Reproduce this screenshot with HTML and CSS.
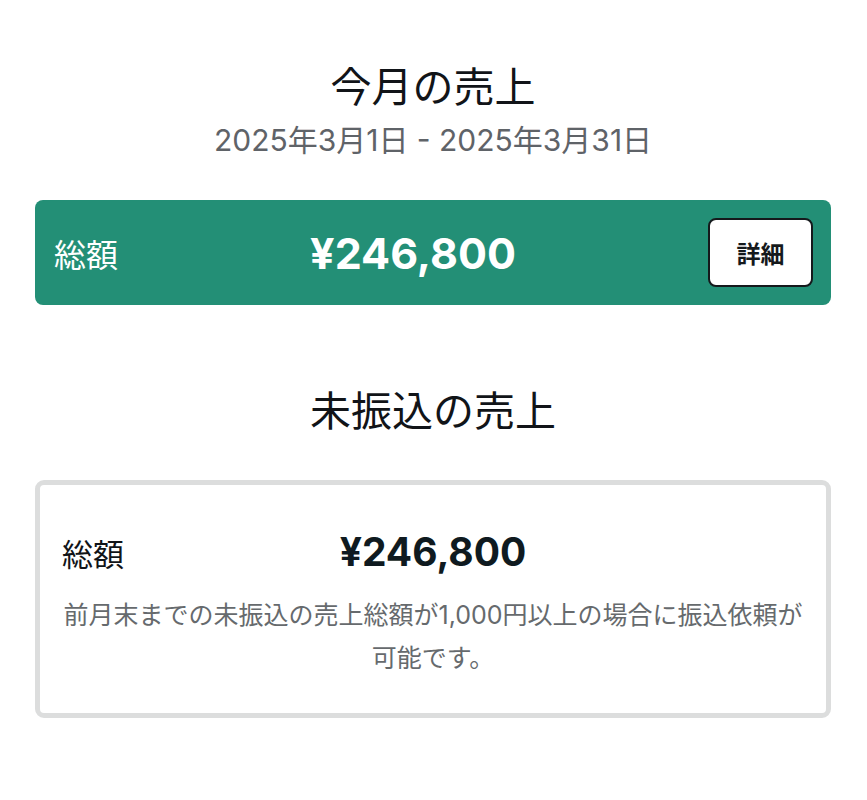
FILE: index.html
```html
<!DOCTYPE html>
<html lang="ja">
<head>
  <meta charset="UTF-8" />
  <meta name="viewport" content="width=device-width, initial-scale=1.0"/>
  <title>売上</title>
  <link rel="stylesheet" href="styles.css">
</head>
<body>
  <div class="container">
    <div class="section-head">
      <h1 class="section-title">今月の売上</h1>
      <p class="period">2025年3月1日 - 2025年3月31日</p>
    </div>

    <div class="total-bar">
      <span class="total-label">総額</span>
      <span class="total-amount">¥246,800</span>
      <button class="detail-btn">詳細</button>
    </div>

    <h2 class="section-title unpaid-title">未振込の売上</h2>

    <div class="unpaid-card">
      <div class="unpaid-row">
        <span class="unpaid-label">総額</span>
        <span class="unpaid-amount">¥246,800</span>
        <span></span>
      </div>
      <p class="unpaid-note">前月末までの未振込の売上総額が1,000円以上の場合に振込依頼が可能です。</p>
    </div>
  </div>
</body>
</html>
```

FILE: styles.css
```css
* {
  margin: 0;
  padding: 0;
  box-sizing: border-box;
}

body, html {
  width: 100%;
  height: 100%;
  background-color: #ffffff;
  font-family: Inter, 'Noto Sans CJK JP', sans-serif;
  color: #111418;
}

.container {
  padding: 61px 36px 0 35px;
  display: flex;
  flex-direction: column;
}

.section-head {
  display: flex;
  flex-direction: column;
  align-items: center;
  gap: 7px;
}

.section-title {
  font-size: 41px;
  line-height: 52px;
  font-weight: 400;
  text-align: center;
}

.period {
  font-size: 30px;
  line-height: 41px;
  color: #5f6368;
}

.total-bar {
  margin-top: 39px;
  height: 105px;
  padding: 0 18px 0 19px;
  background-color: #238f76;
  border-radius: 8px;
  display: flex;
  align-items: center;
  justify-content: space-between;
  color: #fff;
}

.total-label {
  font-size: 32px;
}

.total-amount {
  font-size: 43px;
  font-weight: 700;
}

.detail-btn {
  width: 105px;
  height: 69px;
  background: #fff;
  border: 2px solid #15191c;
  border-radius: 8px;
  font-family: inherit;
  font-size: 24px;
  font-weight: 700;
  color: #15191c;
}

.unpaid-title {
  margin-top: 80px;
}

.unpaid-card {
  margin-top: 43px;
  border: 5px solid #dcdddd;
  border-radius: 9px;
  padding: 43px 22px 33px;
}

.unpaid-row {
  display: grid;
  grid-template-columns: 1fr auto 1fr;
  align-items: center;
}

.unpaid-label {
  font-size: 31px;
}

.unpaid-amount {
  font-size: 39px;
  line-height: 48px;
  font-weight: 700;
  color: #0f1a20;
}

.unpaid-note {
  margin-top: 18px;
  font-size: 25px;
  line-height: 43px;
  text-align: center;
  color: #666a6d;
}
```
